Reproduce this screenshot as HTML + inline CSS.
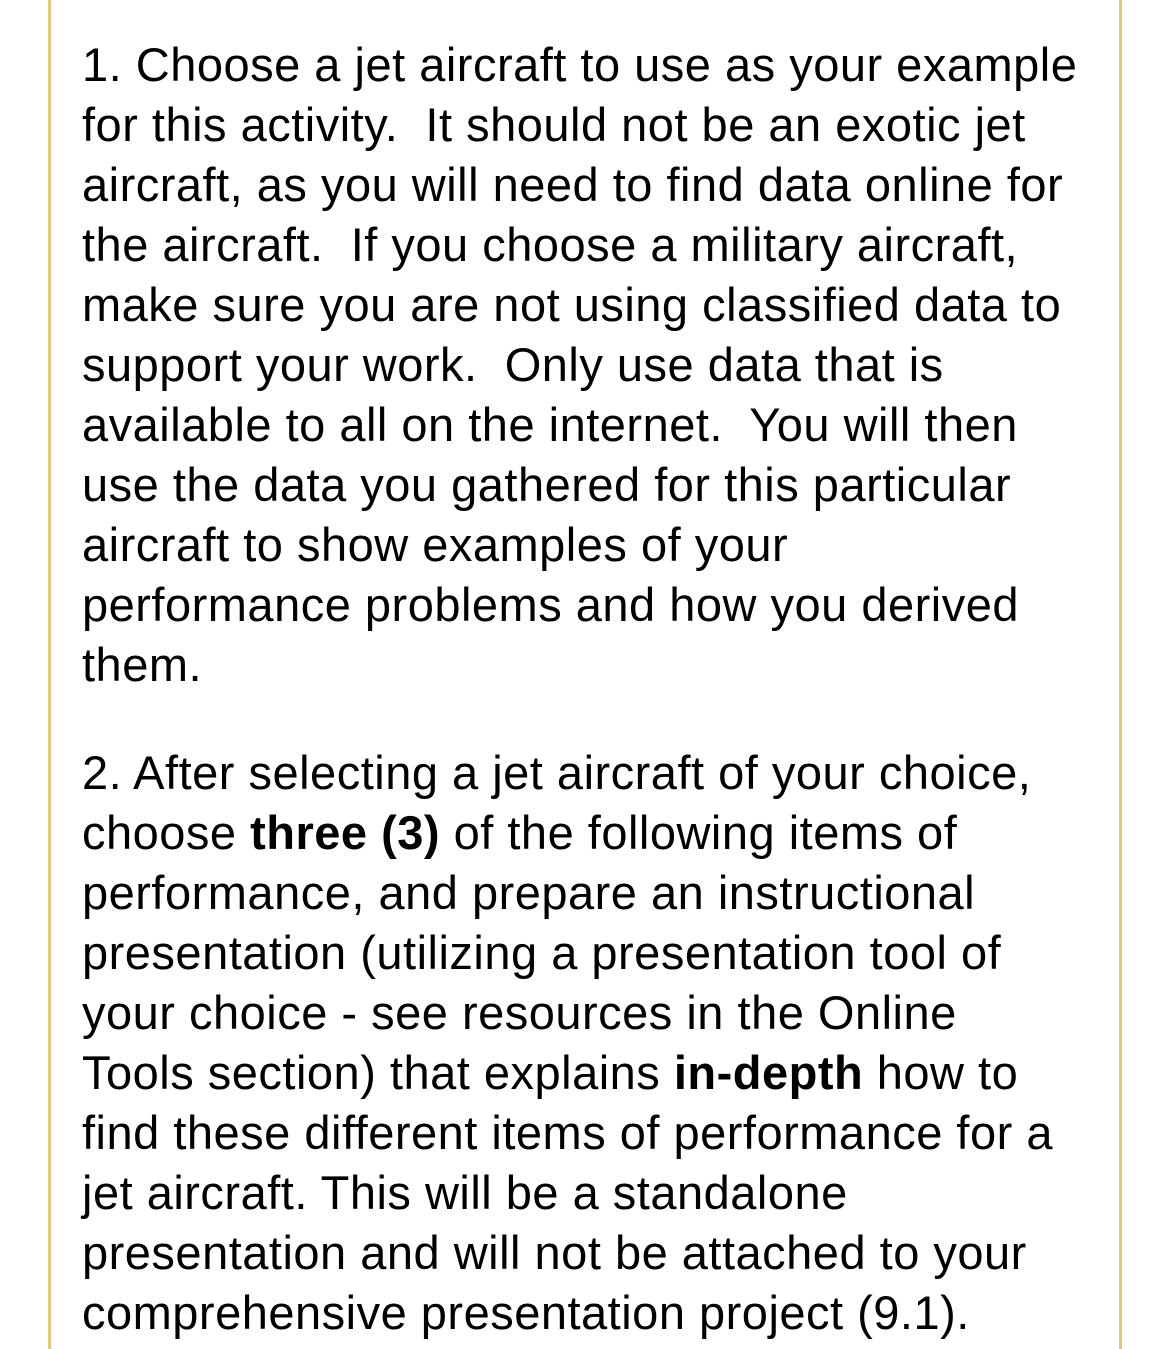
<!DOCTYPE html>
<html><head><meta charset="utf-8"><style>
html,body{margin:0;padding:0;background:#fff;}
body{width:1170px;height:1349px;position:relative;overflow:hidden;font-family:"Liberation Sans",sans-serif;color:#000;}
.bl{position:absolute;top:0;bottom:0;width:3px;background:#e6c873;}
.l{position:absolute;left:82px;font-size:47px;line-height:60px;white-space:nowrap;letter-spacing:0.5px;}
b{font-weight:bold;}
</style></head><body>
<div class="bl" style="left:48px"></div>
<div class="bl" style="left:1119px"></div>
<div class="l" style="top:35px">1. Choose a jet aircraft to use as your example</div>
<div class="l" style="top:95px">for this activity.&nbsp; It should not be an exotic jet</div>
<div class="l" style="top:155px">aircraft, as you will need to find data online for</div>
<div class="l" style="top:215px">the aircraft.&nbsp; If you choose a military aircraft,</div>
<div class="l" style="top:275px">make sure you are not using classified data to</div>
<div class="l" style="top:335px">support your work.&nbsp; Only use data that is</div>
<div class="l" style="top:395px">available to all on the internet.&nbsp; You will then</div>
<div class="l" style="top:455px">use the data you gathered for this particular</div>
<div class="l" style="top:515px">aircraft to show examples of your</div>
<div class="l" style="top:575px">performance problems and how you derived</div>
<div class="l" style="top:635px">them.</div>
<div class="l" style="top:743px">2. After selecting a jet aircraft of your choice,</div>
<div class="l" style="top:803px">choose <b>three (3)</b> of the following items of</div>
<div class="l" style="top:863px">performance, and prepare an instructional</div>
<div class="l" style="top:923px">presentation (utilizing a presentation tool of</div>
<div class="l" style="top:983px">your choice - see resources in the Online</div>
<div class="l" style="top:1043px">Tools section) that explains <b>in-depth</b> how to</div>
<div class="l" style="top:1103px">find these different items of performance for a</div>
<div class="l" style="top:1163px">jet aircraft. This will be a standalone</div>
<div class="l" style="top:1223px">presentation and will not be attached to your</div>
<div class="l" style="top:1283px">comprehensive presentation project (9.1).</div>
</body></html>
